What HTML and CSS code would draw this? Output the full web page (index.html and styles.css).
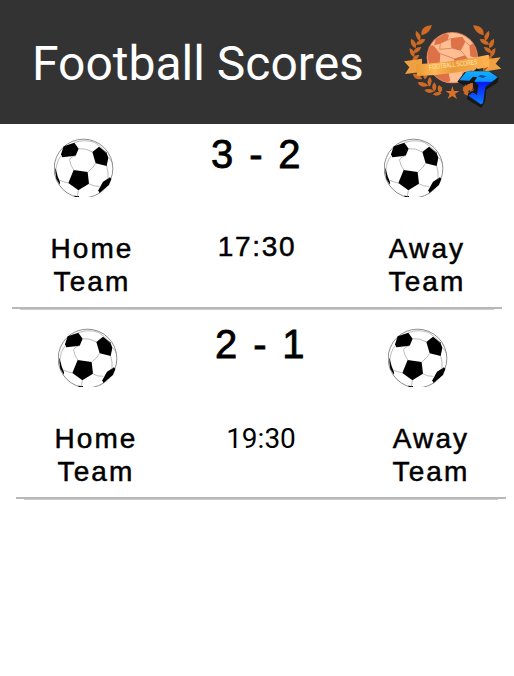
FILE: index.html
```html
<!DOCTYPE html>
<html lang="en">
<head>
<meta charset="utf-8">
<title>Football Scores</title>
<link rel="stylesheet" href="styles.css">
</head>
<body>
<svg class="defs" width="0" height="0" aria-hidden="true">
  <symbol id="ball" viewBox="30 24 180 177">
    <circle cx="118.500" cy="115.500" r="88" fill="#fff" stroke="#555" stroke-width="2"/>
    <g fill="#000">
      <path d="M59 49L91 38L104 56L95 77L55 82L51 73Z"/>
      <path d="M145 66L165 50L187 67L193 83L188 108L155 100Z"/>
      <path d="M89 120L131 126L135 161L103 181L73 159Z"/>
      <path d="M198 142L202 147L195 165L166 189L163 181L177 155Z"/>
      <path d="M32 112L36 119L41 139L48 156V164L37 147Z"/>
      <path d="M90 197L100 198H105V202H94Z"/>
    </g>
    <g fill="none" stroke="#999" stroke-width="2">
      <path d="M104 56Q125 54 146 66M95 77Q76 82 77 92Q80 108 90 121M131 126Q148 114 155 100M188 108Q194 124 192 148M134 161Q148 170 166 169M103 181L100 200M74 159Q58 156 46 150M51 78Q37 95 35 125M91 38Q121 27 151 37Q171 49 187 69M193 83Q202 89 205 100"/>
    </g>
  </symbol>
</svg>
<header class="bar">
  <h1 class="title">Football Scores</h1>
  <svg class="logo" viewBox="0 0 360 330">
    <defs>
      <linearGradient id="gold" x1="0" x2="1"><stop offset="0" stop-color="#e79a35"/><stop offset=".25" stop-color="#ffb655"/><stop offset=".5" stop-color="#e99b3a"/><stop offset="1" stop-color="#ffb252"/></linearGradient>
      <linearGradient id="blue" x1="0" y1="0" x2="0" y2="1"><stop offset="0" stop-color="#10b0ff"/><stop offset=".3" stop-color="#0a92ff"/><stop offset=".34" stop-color="#0719ee"/><stop offset=".55" stop-color="#0a35ff"/><stop offset="1" stop-color="#0a7cff"/></linearGradient>
      <clipPath id="disc"><circle cx="175" cy="131" r="75"/></clipPath>
      <g id="laurel" fill="#cf6a25">
        <path d="M114 34Q80 35 82 64Q106 61 114 34Z"/>
        <path d="M66 50Q61 68 77 81Q86 63 66 50Z"/>
        <path d="M94 76Q75 72 65 92Q87 95 94 76Z"/>
        <path d="M51 74Q47 94 65 103Q71 84 51 74Z"/>
        <path d="M82 99Q62 97 57 117Q75 118 82 99Z"/>
        <path d="M47 102Q45 122 61 130Q67 111 47 102Z"/>
        <path d="M76 123Q60 121 54 139Q71 141 76 123Z"/>
        <path d="M56 179Q61 200 85 195Q77 178 56 179Z"/>
        <path d="M96 170Q82 180 92 196Q107 187 96 170Z"/>
        <path d="M71 205Q80 225 103 215Q91 201 71 205Z"/>
        <path d="M108 188Q95 202 105 218Q119 205 108 188Z"/>
        <path d="M91 228Q102 244 121 232Q109 220 91 228Z"/>
        <path d="M121 205Q108 220 121 233Q133 220 121 205Z"/>
        <path d="M116 241Q130 251 143 238Q130 229 116 241Z"/>
        <path d="M135 213Q126 226 137 237Q148 231 143 220Z"/>
      </g>
    </defs>
    <use href="#laurel"/>
    <use href="#laurel" transform="translate(351 0) scale(-1 1)"/>
    <circle cx="175" cy="131" r="77" fill="#e58a60"/>
    <g clip-path="url(#disc)">
      <circle cx="175" cy="131" r="74" fill="#ffbe92"/>
      <g fill="#dd7147">
        <path d="M125 76L154 58L165 63L161 79L139 89L120 94Z"/>
        <path d="M170 73L205 68L214 83L200 110L172 103Z"/>
        <path d="M98 98L118 94L139 119L137 148L104 151Z"/>
        <path d="M226 94L251 84V133L229 127Z"/>
        <path d="M180 134L213 124L227 140L216 164L181 165Z"/>
        <path d="M137 171L164 178L169 200L148 214L115 188Z"/>
        <path d="M205 178L235 166L242 190L204 208Z"/>
      </g>
      <path d="M161 79L170 73M139 89L137 106L172 103M200 110L213 124M214 83L226 94M139 119L180 134M137 148V171M181 165L164 178M216 164L205 178" fill="none" stroke="#e0875d" stroke-width="3"/>
    </g>
    <path d="M30 142L84 134V174L33 180L46 160Z" fill="#efa040"/>
    <path d="M268 137L320 130L305 149L322 164L268 173Z" fill="#efa040"/>
    <path d="M69 184L83 174V187ZM268 165V176L284 157Z" fill="#a9560f"/>
    <path d="M66 151Q174 145 284 122L286 158Q178 181 69 186Z" fill="url(#gold)"/>
    <text class="logo-text" x="106" y="167" textLength="146" lengthAdjust="spacingAndGlyphs" transform="rotate(-6.500 106 167)">FOOTBALL SCORES</text>
    <path d="M175 216L180 231H196L183 240L189 255L175 246L161 255L167 240L155 231H171Z" fill="#dc7028"/>
    <path d="M212 174L244 170L248 162L258 171H286L315 192L310 206L277 227L273 263L262 282L219 255L223 238L240 228L236 206L208 213L190 203Z" fill="#171717"/>
    <path d="M212 238Q208 222 222 211L237 207L235 224Q224 226 220 237Z" fill="#cf6a25"/>
    <path d="M218 172H285L311 190L274 219L267 268L260 271L223 245L236 235L249 243L253 214L241 202L250 190L237 188L226 200L196 199Z" fill="url(#blue)"/>
    <path d="M251 187L262 183L277 187L267 192Z" fill="#174d86"/>
  </svg>
</header>
<main class="scores">
  <section class="match">
    <div class="team"><svg class="ball"><use href="#ball"/></svg><p class="name">Home<br>Team</p></div>
    <div class="result"><p class="score">3 - 2</p><p class="time">17:30</p></div>
    <div class="team away"><svg class="ball"><use href="#ball"/></svg><p class="name">Away<br>Team</p></div>
  </section>
  <section class="match shifted">
    <div class="team"><svg class="ball"><use href="#ball"/></svg><p class="name">Home<br>Team</p></div>
    <div class="result"><p class="score">2 - 1</p><p class="time plain">19:30</p></div>
    <div class="team away"><svg class="ball"><use href="#ball"/></svg><p class="name">Away<br>Team</p></div>
  </section>
</main>
</body>
</html>
```
FILE: styles.css
```css
* { box-sizing: border-box; margin: 0; padding: 0; }
body { background: #fff; color: #000; font-family: "Liberation Sans", Arial, sans-serif; }
.defs { display: none; }
.bar { display: flex; align-items: flex-start; justify-content: space-between; height: 124px; background: #333; padding-left: 32px; }
.title { font: 400 48px/56px Roboto, sans-serif; color: #fff; padding-top: 36px; white-space: nowrap; }
.logo { width: 120px; height: 110px; margin-top: 14px; flex: none; }
.logo-text { font: 21px "Liberation Sans", sans-serif; fill: #ffe9b8; }
.match { display: grid; grid-template-columns: 160px 170px 160px; width: 490px; height: 190px; margin-left: 12px; padding-top: 14px; background: linear-gradient(#b8b8b8, #b8b8b8) 0 183px / 490px 2px no-repeat, linear-gradient(#ccc, #ccc) 8px 185px / 474px 1px no-repeat; }
.shifted { margin-left: 16px; }
.team, .result { display: flex; flex-direction: column; align-items: center; text-align: center; }
.ball { width: 60px; height: 59px; margin-right: 16px; }
.name { margin-top: 35px; font-size: 28px; line-height: 33px; letter-spacing: 2.1px; -webkit-text-stroke: .5px #000; }
.away .name { margin-left: 10px; }
.score { font-size: 40px; line-height: 46px; letter-spacing: 2.4px; -webkit-text-stroke: .8px #000; white-space: nowrap; margin-top: -7px; }
.time { margin-top: 53px; font-size: 28px; line-height: 33px; letter-spacing: 1.7px; -webkit-text-stroke: .5px #000; }
.plain { margin-top: 55px; font-family: Roboto, sans-serif; letter-spacing: 0; -webkit-text-stroke: 0; }
```
